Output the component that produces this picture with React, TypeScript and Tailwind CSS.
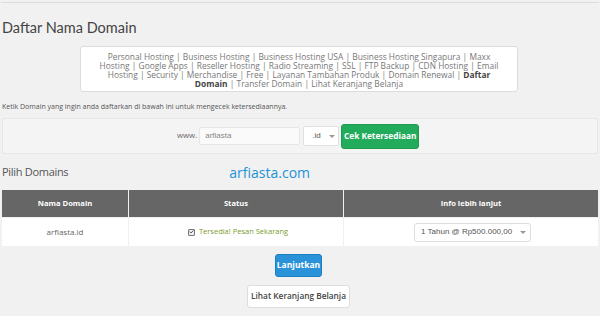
import { Check } from 'lucide-react'

const lines = [
  ['Personal Hosting', 'Business Hosting', 'Business Hosting USA', 'Business Hosting Singapura', 'Maxx'],
  ['Hosting', 'Google Apps', 'Reseller Hosting', 'Radio Streaming', 'SSL', 'FTP Backup', 'CDN Hosting', 'Email'],
  ['Hosting', 'Security', 'Merchandise', 'Free', 'Layanan Tambahan Produk', 'Domain Renewal', 'Daftar'],
  ['Domain', 'Transfer Domain', 'Lihat Keranjang Belanja'],
]

function Caret() {
  return <span className="ml-2 inline-block h-0 w-0 border-x-[3px] border-t-[3px] border-x-transparent border-t-[#999]" />
}

export default function App() {
  return (
    <div className="h-[316px] w-[600px] overflow-hidden bg-[#f1f1f1] font-['Open_Sans',sans-serif] text-[#555]">
      <div className="mx-[1px] mt-[2px] border-t border-[#dcdcdc]" />
      <h1 className="mt-[15px] pl-[2px] font-['Lato',sans-serif] text-[14.5px] leading-[20px] text-[#444]">Daftar Nama Domain</h1>

      {/* category links, wrapped the same way as the original page */}
      <div className="ml-[80px] mt-[8px] w-[438px] rounded-[3px] border border-[#dcdcdc] bg-white pb-[3px] pt-[5px] text-center text-[8.4px] leading-[9px] text-[#777]">
        {lines.map((line, li) => (
          <div key={li} className="whitespace-nowrap">
            {line.map((l, i) => {
              const bold = (li === 2 && l === 'Daftar') || (li === 3 && i === 0)
              return (
                <span key={i}>
                  {i > 0 && ' | '}
                  <span className={bold ? 'font-bold text-[#444]' : ''}>{l}</span>
                </span>
              )
            })}
          </div>
        ))}
      </div>

      <p className="mt-[10px] pl-[2px] text-[7px] leading-[10px] text-[#555]">
        Ketik Domain yang ingin anda daftarkan di bawah ini untuk mengecek ketersediaannya.
      </p>

      {/* search box */}
      <div className="mx-[2px] mt-[6px] flex h-[36px] items-center rounded-[2px] border border-[#e6e6e6] bg-[#f4f4f4] pl-[174px]">
        <span className="mr-[2px] text-[7.8px] text-[#666]">www.</span>
        <div className="flex h-[18px] w-[101px] items-center rounded-[2px] border border-[#e6e6e6] bg-[#fafafa] pl-[5px] font-['Liberation_Sans',sans-serif] text-[8px] text-[#888]">
          arfiasta
        </div>
        <div className="ml-[3px] flex h-[20px] w-[36px] items-center rounded-[2px] border border-[#e0e0e0] bg-white pl-[8px] font-['Liberation_Sans',sans-serif] text-[8px] text-[#555]">
          .id
          <Caret />
        </div>
        <button className="ml-[2px] h-[25px] w-[78px] whitespace-nowrap rounded-[3px] border border-[#1e9a50] bg-[#22ab5b] text-[8.3px] font-bold text-white">
          Cek Ketersediaan
        </button>
      </div>

      <div className="mt-[8px] flex h-[20px] items-center">
        <span className="pl-[2px] text-[11px] tracking-[-0.3px] text-[#555]">Pilih Domains</span>
        <span className="ml-[161px] text-[14px] text-[#1d92d8]">arfiasta.com</span>
      </div>

      {/* table */}
      <div className="mx-[2px] mt-[8px] grid grid-cols-[126px_214px_1fr] gap-x-px">
        <div className="flex h-[27px] items-center justify-center bg-[#666] text-[7.6px] font-bold text-white">Nama Domain</div>
        <div className="flex h-[27px] items-center justify-center bg-[#666] text-[7.6px] font-bold text-white">Status</div>
        <div className="flex h-[27px] items-center justify-center bg-[#666] text-[7.6px] font-bold text-white">Info lebih lanjut</div>
        <div className="mt-px flex h-[28px] items-center justify-center bg-white text-[8px] text-[#666]">arfiasta.id</div>
        <div className="mt-px flex h-[28px] items-center justify-center bg-white pl-[4px] text-[7.5px] text-[#7e9a2c]">
          <span className="mr-[4px] flex h-[7px] w-[7px] items-center justify-center rounded-[1px] border border-[#777] bg-[#eee]">
            <Check className="h-[6px] w-[6px] text-[#333]" strokeWidth={4} />
          </span>
          Tersedia! Pesan Sekarang
        </div>
        <div className="mt-px flex h-[28px] items-center justify-center bg-white">
          <div className="ml-[3px] flex h-[19px] w-[117px] items-center rounded-[3px] border border-[#ddd] bg-white pl-[6px] font-['Liberation_Sans',sans-serif] text-[8px] text-[#555]">
            1 Tahun @ Rp500.000,00
            <Caret />
          </div>
        </div>
      </div>

      <div className="mt-[8px] flex flex-col items-center">
        <button className="ml-[-3px] h-[23px] w-[47px] whitespace-nowrap rounded-[3px] border border-[#1e7fc0] bg-[#2a92d8] text-[8.5px] font-bold text-white">
          Lanjutkan
        </button>
        <button className="ml-[-3px] mt-[8px] h-[23px] w-[103px] whitespace-nowrap rounded-[3px] border border-[#ddd] bg-white text-[8.3px] font-semibold text-[#444]">
          Lihat Keranjang Belanja
        </button>
      </div>
    </div>
  )
}
